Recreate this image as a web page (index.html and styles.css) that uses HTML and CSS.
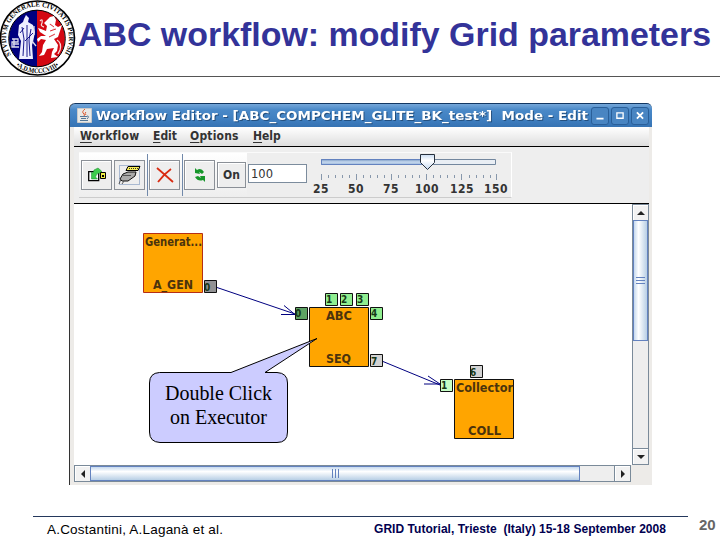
FILE: index.html
```
<!DOCTYPE html>
<html lang="en">
<head>
<meta charset="utf-8">
<title>ABC workflow</title>
<link rel="stylesheet" href="styles.css">
</head>
<body>
<header class="header">
  <svg class="seal" width="76" height="76" viewBox="0 0 76 76">
    <defs><path id="ring" d="M11 55A31.500 31.500 0 1 1 64 55"/><path id="ringlow" d="M14.500 64.500A35 35 0 0 0 60.500 64.500"/></defs>
    <circle cx="37.5" cy="38" r="37" fill="#fff" stroke="#000" stroke-width="1.6"/>
    <path d="M37 10A28 28.5 0 0 0 37 67Z" fill="#00007f"/>
    <path d="M37 10A28 28.5 0 0 1 37 67Z" fill="#d40812"/>
    <circle cx="37" cy="38.500" r="28.300" fill="none" stroke="#000"/>
    <text class="seal-text"><textPath href="#ring" textLength="133" lengthAdjust="spacingAndGlyphs">STVDIVM GENERALE CIVITATIS PERVSII</textPath></text>
    <text class="seal-text"><textPath href="#ringlow" startOffset="2" textLength="46" lengthAdjust="spacingAndGlyphs">•A.D.MCCCVIII•</textPath></text>
    <path d="M24 19l2-4 3 3-1 4 5 3 2 7-2 10-1 3 1 14H19l2-18-3-6 1-10 4-3Z" fill="#eef"/>
    <path d="M22 27l2 12-1 17M27 25v32M31 29l-2 11 1 16M20 33l4-5M33 33l-8 8" fill="none" stroke="#00007f" stroke-width=".9"/>
    <path d="M12 39h6v3h-6v5h7M13 44h6M32 41l4 5M14 39v8M34 26v9" stroke="#dde" stroke-width="1.300" fill="none"/>
    <path d="M50 17l4-1 2 4-1 5 3 2 4-2-2 6-2 6-4 2 4 6-1 6-3 3 4 3-7 1 1-6 2-4-7 1-3 6-5 1 3-4 1-7 3-5-5-1-3 3-1-3 4-3h5l-6-4-2-4 3 1 5 2 1-5-3-3Z" fill="#fff"/>
    <path d="M40 21q3-3 2 2-2 3 2 4M57 40q5 3 3 10l-2 4M49 24l4 2M51 31l4-3M49 37l5-2" fill="none" stroke="#f5dada" stroke-width="1.300"/>
    <path d="M50 24l4 3M50 31l6-2M49 37l6-3" stroke="#d40812" stroke-width=".8"/>
  </svg>
  <h1 class="title"><svg width="642" height="76"><text x="2" y="45.500" textLength="633" lengthAdjust="spacingAndGlyphs">ABC workflow: modify Grid parameters</text></svg></h1>
</header>

<main class="window">
  <div class="titlebar">
    <svg width="15" height="15" viewBox="0 0 15 15"><path fill="#e9e9e5" stroke="#c9c9c9" d="M.5.5h14v14H.5z"/><path d="M8 1q-4 3-1 5 1 1 0 2M9 4q-2 1 0 3" stroke="#dc5b32" fill="none"/><path d="M3 8.500h7M4 10.500h5M3 12.500h8M10 8q3 0 0 3" stroke="#547797" fill="none"/></svg>
    <svg class="caption" width="496" height="23"><text x="1" y="16" textLength="492" lengthAdjust="spacingAndGlyphs">Workflow Editor - [ABC_COMPCHEM_GLITE_BK_test*]&#160; Mode - Edit</text></svg>
    <div class="winbtns">
      <svg viewBox="0 0 18 18"><path d="M5 12h8" stroke="#fff" stroke-width="2"/></svg>
      <svg viewBox="0 0 18 18"><path d="M5.500 5.500h7v6h-7z" fill="none" stroke="#fff" stroke-width="1.500"/></svg>
      <svg viewBox="0 0 18 18"><path d="M5.500 5l7 7M12.500 5l-7 7" stroke="#fff" stroke-width="2"/></svg>
    </div>
  </div>
  <div class="body">
    <nav class="menu">
      <span class="m1"><u>W</u>orkflow</span><span class="m2"><u>E</u>dit</span><span class="m3"><u>O</u>ptions</span><span class="m4"><u>H</u>elp</span>
    </nav>
    <div class="toolbar">
      <div class="tools">
        <div class="buttons">
          <div class="btn"><svg width="18" height="16"><path d="M.7 4.700h10v9H.7z" fill="#fff" stroke="#000" stroke-width="1.300"/><path d="M3.500 5v7h6l-2-2q1-4 4-4l2 2V4L10 1 6 3 5 6Z" fill="#3dcc4c" stroke="#16802b" stroke-width=".5"/><path d="M12.500 5.500h5v6h-5z" fill="#ee4" stroke="#000"/><path d="M14 8h2v2h-2z"/></svg></div>
          <div class="btn focus"><svg width="23" height="20"><path d="M10 1.500h12l-2 4H8z" fill="#f6ed57" stroke="#000"/><path d="M11 3.500h9" stroke="#332" stroke-dasharray="1 1"/><path d="M5 9l5-2h8l-1 4-7 5H4l-2-2z" fill="#aaa" stroke="#111"/><path d="M5 10.500h8M3 14l-2 5M6 16l-2 3" fill="none" stroke="#555"/></svg></div>
          <i class="sep"></i>
          <div class="btn"><svg width="18" height="18"><path d="M1 2q7 6 16 14M15 3Q8 8 2 16" fill="none" stroke="#d92c12" stroke-width="1.800"/></svg></div>
          <i class="sep"></i>
          <div class="btn"><svg width="14" height="16"><path d="M2 6V1l2 2q4-3 7 2l-2 2-3-2 1 2zM12 9v6l-2-2q-5 2-8-3l3-1 3 2-1-2z" fill="#16962a"/></svg></div>
          <div class="btn on">On</div>
        </div>
        <div class="field">100</div>
        <svg class="slider" width="204" height="45" viewBox="307 152 204 45">
          <defs><linearGradient id="tr" x2="0" y2="1"><stop stop-color="#7c9bc4"/><stop offset=".5" stop-color="#c4d7ee"/><stop offset="1" stop-color="#a0bbdc"/></linearGradient><linearGradient id="th" x2="0" y2="1"><stop stop-color="#c9dcf2"/><stop offset=".4" stop-color="#fff"/><stop offset="1" stop-color="#c5d9f0"/></linearGradient></defs>
          <path d="M321.500 158.500h174v5h-174z" fill="#e9eef4" stroke="#73879e"/>
          <path d="M321.500 158.500h100v5h-100z" fill="url(#tr)" stroke="#6382bf"/>
          <path d="M420.500 153.500h14v8l-7 7-7-7z" fill="url(#th)" stroke="#26303c"/>
          <path d="M328.500 174v3m7-3v3m7-3v3m7-3v3m14-3v3m7-3v3m7-3v3m7-3v3m14-3v3m7-3v3m7-3v3m7-3v3m14-3v3m7-3v3m7-3v3m7-3v3m15-3v3m7-3v3m7-3v3m7-3v3M321.500 173v6m35-6v6m35-6v6m35-6v6m35-6v6m35-6v6" stroke="#8797ab"/>
          <g class="scale"><text x="321" y="192">25</text><text x="356" y="192">50</text><text x="391" y="192">75</text><text x="427" y="192">100</text><text x="462" y="192">125</text><text x="496" y="192">150</text></g>
        </svg>
      </div>
    </div>
    <div class="work">
      <svg class="canvas" width="558" height="261" viewBox="74 204 558 261">
        <g fill="none" stroke="#000080"><path d="M217 287.500L295 314M281 314.500H295L284 305.500M383 361.500L440 385M424 384H440L428 376"/></g>
        <g class="nodes">
          <path d="M143.500 233.500h59v59h-59z" stroke="#b52e16"/><path d="M309.500 307.500h59v59h-59zM454.500 379.500h59v59h-59z"/>
        </g>
        <g stroke="#111">
          <path d="M204.500 280.500h12v12h-12z" fill="#929294"/><path d="M295.500 307.500h12v12h-12z" fill="#5ea263"/>
          <path d="M325.500 293.500h12v12h-12zM340.500 293.500h12v12h-12zM356.500 293.500h12v12h-12zM370.500 307.500h12v12h-12z" fill="#90ee90"/>
          <path d="M370.500 354.500h12v12h-12zM470.500 365.500h12v12h-12z" fill="#d3d3d3"/><path d="M440.500 379.500h12v12h-12z" fill="#c6ffc6"/>
        </g>
        <g class="node-label">
          <text x="145" y="246" textLength="57" lengthAdjust="spacingAndGlyphs">Generat...</text><text x="153" y="289" textLength="40" lengthAdjust="spacingAndGlyphs">A_GEN</text>
          <text x="326" y="320" textLength="26" lengthAdjust="spacingAndGlyphs">ABC</text><text x="326" y="363" textLength="25" lengthAdjust="spacingAndGlyphs">SEQ</text>
          <text x="456" y="392" textLength="57" lengthAdjust="spacingAndGlyphs">Collector</text><text x="468" y="435" textLength="33" lengthAdjust="spacingAndGlyphs">COLL</text>
        </g>
        <g class="port-label"><text x="204" y="291">0</text><text x="295" y="317">0</text><text x="326" y="303">1</text><text x="341" y="303">2</text><text x="357" y="303">3</text><text x="371" y="317">4</text><text x="371" y="365">7</text><text x="470" y="376">6</text><text x="441" y="389">1</text></g>
        <path d="M159.500 372.500H231L317 338.500 265 372.500H277Q287.500 373 287.500 383V432Q287.500 442.500 277 442.500H160Q149.500 442 149.500 432V383Q149.500 373 159.500 372.500Z" fill="#ccf" stroke="#000"/>
        <g class="note"><text x="165" y="400" textLength="107">Double Click</text><text x="170" y="424" textLength="97">on Executor</text></g>
      </svg>
      <div class="vbar">
        <div class="arrow"><svg width="8" height="4"><path d="M0 4l4-4 4 4z"/></svg></div>
        <div class="vthumb"><i></i></div>
        <div class="vspace"></div>
        <div class="arrow"><svg width="8" height="4"><path d="M0 0h8L4 4z"/></svg></div>
      </div>
      <div class="hbar">
        <div class="arrow"><svg width="4" height="8"><path d="M4 0v8L0 4z"/></svg></div>
        <div class="hthumb"><i></i></div>
        <div class="hspace"></div>
        <div class="arrow"><svg width="4" height="8"><path d="M0 0v8l4-4z"/></svg></div>
      </div>
    </div>
  </div>
</main>

<footer class="footer">
  <div class="credits">
    <svg width="655" height="23"><text class="authors" x="14" y="17" textLength="176">A.Costantini, A.Laganà et al.</text><text class="event" x="341" y="16" textLength="292">GRID Tutorial, Trieste&#160; (Italy) 15-18 September 2008</text></svg>
  </div>
  <span class="page">20</span>
</footer>
</body>
</html>
```
FILE: styles.css
```
* { box-sizing: border-box; }
body { margin: 0; width: 720px; height: 540px; background: #fff; overflow: hidden; display: flex; flex-direction: column; }
svg { display: block; flex: none; }
.header { height: 77px; border-bottom: 1px solid #555; display: flex; flex: none; }
.seal-text { font: bold 7px "Liberation Serif", serif; }
.title { margin: 0; font: bold 33.5px "Liberation Sans", sans-serif; fill: #333399; }

.window { width: 583px; height: 382px; flex: none; margin: 26px 0 0 69px; background: #edebe8; border-left: 1px solid #333; border-radius: 6px 5px 0 0; overflow: hidden; }
.titlebar { height: 24px; margin-left: -1px; padding-left: 7px; display: flex; align-items: center; border-top: 1px solid #123763; border-left: 1px solid #163a68; border-radius: 6px 5px 0 0; background: linear-gradient(#75a7d9, #4a89c8 25%, #3f7fc0 65%, #3673b3); }
.caption { margin-left: 3px; font: bold 13px "DejaVu Sans", sans-serif; fill: #fff; filter: drop-shadow(1px 1px 0 #24507f); }
.winbtns { display: flex; gap: 2px; }
.winbtns svg { width: 18px; height: 18px; border: 1px solid #2a5f99; border-radius: 3px; background: #4985c2; }
.body { width: 575px; margin-left: 4px; }
.menu { height: 20px; border-bottom: 1px solid #000; padding-left: 6px; display: flex; font: bold 12px/19px "DejaVu Sans Condensed", "DejaVu Sans", sans-serif; color: #333; background: linear-gradient(#fff, #dedede); }
.menu u { text-underline-offset: 2px; }
.m1 { width: 73px; letter-spacing: .3px; } .m2 { width: 37px; } .m3 { width: 63px; letter-spacing: .2px; }
.toolbar { height: 57px; border-bottom: 1px solid #000; background: #eee; padding: 5px 0 0 5px; }
.tools { width: 433px; height: 46px; display: flex; border-bottom: 1px solid #ccc; border-right: 1px solid #fff; border-top: 1px solid #fafafa; }
.buttons { display: flex; align-items: center; gap: 2px; width: 168px; padding-left: 2px; background: linear-gradient(#fff, #eee); }
.btn { width: 31px; height: 30px; flex: none; display: flex; align-items: center; justify-content: center; border: 1px solid #8b9097; background: #eee; box-shadow: inset 1px 1px #fff; }
.focus { box-shadow: inset 0 0 0 4px #eee, inset 0 0 0 5px #a9b9d1; }
.sep { width: 1px; height: 42px; background: #7189aa; margin: 0 -.5px; }
.on { width: 29px; height: 26px; font: bold 12px "DejaVu Sans Condensed", sans-serif; color: #333; }
.field { width: 59px; height: 19px; margin: 11px 0 0 1px; flex: none; border: 1px solid #7c8c9d; background: #fff; font: 11.5px/18px "DejaVu Sans", sans-serif; color: #333; padding-left: 2px; }
.scale { font: bold 12px "DejaVu Sans Condensed", sans-serif; letter-spacing: .5px; fill: #333; text-anchor: middle; }
.work { display: grid; grid-template-columns: 558px 17px; grid-template-rows: 261px 17px; }
.canvas { background: #fff; }
.nodes { fill: #ffa500; stroke: #111; }
.node-label { font: bold 12px "DejaVu Sans Condensed", sans-serif; fill: #4b330d; }
.port-label { font: bold 10px "DejaVu Sans Condensed", sans-serif; fill: #173817; }
.note { font: 20px "Liberation Serif", serif; fill: #000; }
.vbar { width: 17px; border: 1px solid #7a8a99; display: flex; flex-direction: column; background: #eee; }
.arrow { flex: none; width: 15px; height: 15px; display: flex; align-items: center; justify-content: center; background: #f2f2f2; fill: #222; box-shadow: inset 1px 1px #fff; }
.vthumb { height: 121px; border: 1px solid #6382bf; display: flex; align-items: center; justify-content: center; background: linear-gradient(90deg, #c6d9ee, #fff 35%, #b8cfe5); }
.vthumb i { width: 9px; height: 7px; background: repeating-linear-gradient(#6382bf 0 1px, transparent 1px 3px); }
.vspace { flex: 1; border-bottom: 1px solid #7a8a99; }
.hbar { width: 557px; height: 17px; border: 1px solid #7a8a99; display: flex; background: #eee; }
.hthumb { width: 490px; border: 1px solid #6382bf; display: flex; align-items: center; justify-content: center; background: linear-gradient(#c6d9ee, #fff 35%, #b8cfe5); }
.hthumb i { width: 7px; height: 9px; background: repeating-linear-gradient(90deg, #6382bf 0 1px, transparent 1px 3px); }
.hspace { flex: 1; border-right: 1px solid #7a8a99; }
.footer { display: flex; margin: 31px 0 0 33px; height: 24px; flex: none; }
.credits { width: 655px; border-top: 1px solid #24385c; }
.authors { font: 13.5px "Liberation Sans", sans-serif; fill: #000; }
.event { font: bold 12px "Liberation Sans", sans-serif; fill: #000050; }
.page { font: bold 15px/17px "Liberation Sans", sans-serif; color: #666; margin-left: 11px; }
```
